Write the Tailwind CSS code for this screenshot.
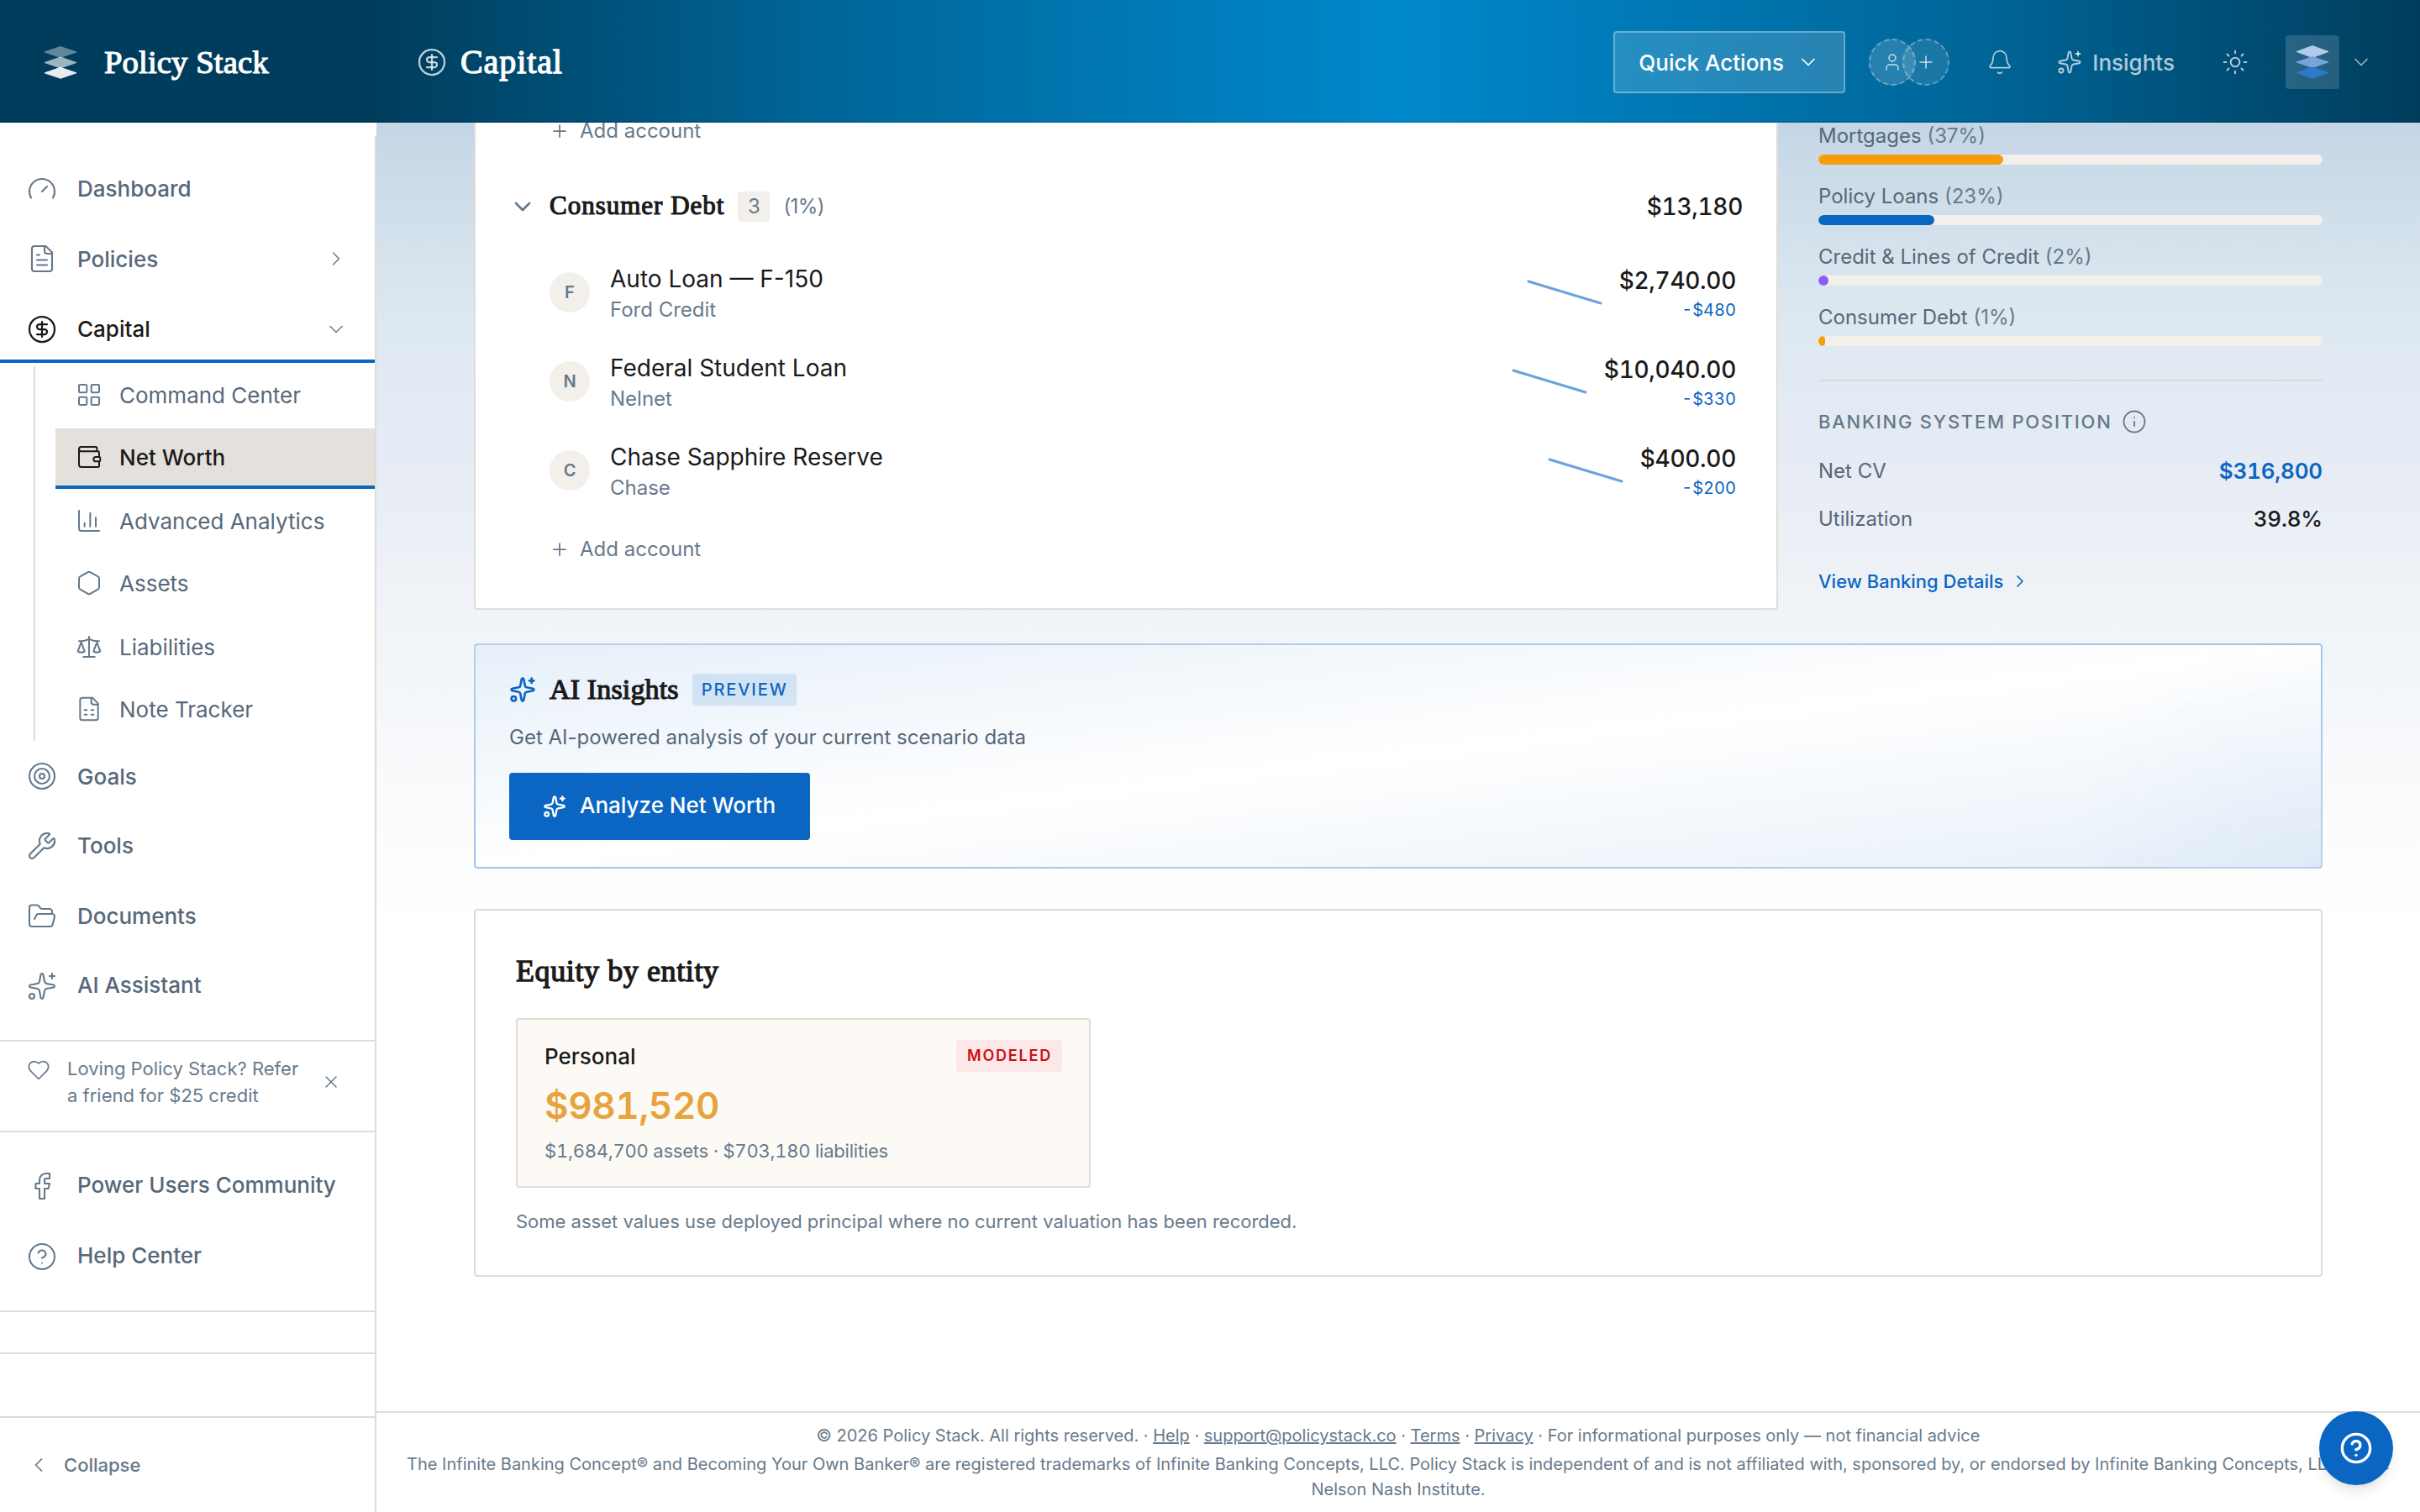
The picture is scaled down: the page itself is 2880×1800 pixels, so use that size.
<!DOCTYPE html>
<html lang="en">
<head>
    <meta charset="UTF-8">
    <meta name="viewport" content="width=device-width, initial-scale=1.0">
    <title>Policy Stack - Net Worth</title>
    <script src="https://cdn.jsdelivr.net/npm/@tailwindcss/browser@4"></script>
</head>
<body class="h-[1800px] w-[2880px] overflow-hidden bg-white font-[Inter,sans-serif] text-[#1a1a1a] antialiased">

    <!-- Icon sprite -->
    <svg class="hidden">
        <symbol id="gauge" viewBox="0 0 24 24"><path d="m12 14 4-4"/><path d="M3.34 19a10 10 0 1 1 17.32 0"/></symbol>
        <symbol id="file-text" viewBox="0 0 24 24"><path d="M15 2H6a2 2 0 0 0-2 2v16a2 2 0 0 0 2 2h12a2 2 0 0 0 2-2V7Z"/><path d="M14 2v4a2 2 0 0 0 2 2h4"/><path d="M10 9H8"/><path d="M16 13H8"/><path d="M16 17H8"/></symbol>
        <symbol id="dollar" viewBox="0 0 24 24"><circle cx="12" cy="12" r="10"/><path d="M16 8h-6a2 2 0 1 0 0 4h4a2 2 0 1 1 0 4H8"/><path d="M12 18V6"/></symbol>
        <symbol id="grid" viewBox="0 0 24 24"><rect width="7" height="7" x="3" y="3" rx="1"/><rect width="7" height="7" x="14" y="3" rx="1"/><rect width="7" height="7" x="14" y="14" rx="1"/><rect width="7" height="7" x="3" y="14" rx="1"/></symbol>
        <symbol id="wallet" viewBox="0 0 24 24"><path d="M19 7V4a1 1 0 0 0-1-1H5a2 2 0 0 0 0 4h15a1 1 0 0 1 1 1v4h-3a2 2 0 0 0 0 4h3a1 1 0 0 0 1-1v-2a1 1 0 0 0-1-1"/><path d="M3 5v14a2 2 0 0 0 2 2h15a1 1 0 0 0 1-1v-4"/></symbol>
        <symbol id="chart" viewBox="0 0 24 24"><path d="M3 3v16a2 2 0 0 0 2 2h16"/><path d="M18 17V9"/><path d="M13 17V5"/><path d="M8 17v-3"/></symbol>
        <symbol id="hexagon" viewBox="0 0 24 24"><path d="M21 16V8a2 2 0 0 0-1-1.73l-7-4a2 2 0 0 0-2 0l-7 4A2 2 0 0 0 3 8v8a2 2 0 0 0 1 1.73l7 4a2 2 0 0 0 2 0l7-4A2 2 0 0 0 21 16z"/></symbol>
        <symbol id="scale" viewBox="0 0 24 24"><path d="m16 16 3-8 3 8c-.87.65-1.92 1-3 1s-2.13-.35-3-1Z"/><path d="m2 16 3-8 3 8c-.87.65-1.92 1-3 1s-2.13-.35-3-1Z"/><path d="M7 21h10"/><path d="M12 3v18"/><path d="M3 7h2c2 0 5-1 7-2 2 1 5 2 7 2h2"/></symbol>
        <symbol id="sheet" viewBox="0 0 24 24"><path d="M15 2H6a2 2 0 0 0-2 2v16a2 2 0 0 0 2 2h12a2 2 0 0 0 2-2V7Z"/><path d="M14 2v4a2 2 0 0 0 2 2h4"/><path d="M8 13h2"/><path d="M14 13h2"/><path d="M8 17h2"/><path d="M14 17h2"/></symbol>
        <symbol id="target" viewBox="0 0 24 24"><circle cx="12" cy="12" r="10"/><circle cx="12" cy="12" r="6"/><circle cx="12" cy="12" r="2"/></symbol>
        <symbol id="wrench" viewBox="0 0 24 24"><path d="M14.7 6.3a1 1 0 0 0 0 1.4l1.6 1.6a1 1 0 0 0 1.4 0l3.106-3.105c.32-.322.863-.22.983.218a6 6 0 0 1-8.259 7.057l-7.91 7.91a1 1 0 0 1-2.999-3l7.91-7.91a6 6 0 0 1 7.057-8.259c.438.12.54.662.219.984z"/></symbol>
        <symbol id="folder" viewBox="0 0 24 24"><path d="m6 14 1.5-2.9A2 2 0 0 1 9.24 10H20a2 2 0 0 1 1.94 2.5l-1.54 6a2 2 0 0 1-1.95 1.5H4a2 2 0 0 1-2-2V5a2 2 0 0 1 2-2h3.9a2 2 0 0 1 1.69.9l.81 1.2a2 2 0 0 0 1.67.9H18a2 2 0 0 1 2 2v2"/></symbol>
        <symbol id="sparkles" viewBox="0 0 24 24"><path d="M11.017 2.814a1 1 0 0 1 1.966 0l1.051 5.558a2 2 0 0 0 1.594 1.594l5.558 1.051a1 1 0 0 1 0 1.966l-5.558 1.051a2 2 0 0 0-1.594 1.594l-1.051 5.558a1 1 0 0 1-1.966 0l-1.051-5.558a2 2 0 0 0-1.594-1.594l-5.558-1.051a1 1 0 0 1 0-1.966l5.558-1.051a2 2 0 0 0 1.594-1.594z"/><path d="M20 2v4"/><path d="M22 4h-4"/><circle cx="4" cy="20" r="2"/></symbol>
        <symbol id="heart" viewBox="0 0 24 24"><path d="M19 14c1.49-1.46 3-3.21 3-5.5A5.5 5.5 0 0 0 16.5 3c-1.76 0-3 .5-4.5 2-1.5-1.5-2.74-2-4.5-2A5.5 5.5 0 0 0 2 8.5c0 2.3 1.5 4.05 3 5.5l7 7Z"/></symbol>
        <symbol id="x" viewBox="0 0 24 24"><path d="M18 6 6 18"/><path d="m6 6 12 12"/></symbol>
        <symbol id="facebook" viewBox="0 0 24 24"><path d="M18 2h-3a5 5 0 0 0-5 5v3H7v4h3v8h4v-8h3l1-4h-4V7a1 1 0 0 1 1-1h3z"/></symbol>
        <symbol id="help" viewBox="0 0 24 24"><circle cx="12" cy="12" r="10"/><path d="M9.09 9a3 3 0 0 1 5.83 1c0 2-3 3-3 3"/><path d="M12 17h.01"/></symbol>
        <symbol id="info" viewBox="0 0 24 24"><circle cx="12" cy="12" r="10"/><path d="M12 16v-4"/><path d="M12 8h.01"/></symbol>
        <symbol id="bell" viewBox="0 0 24 24"><path d="M10.268 21a2 2 0 0 0 3.464 0"/><path d="M3.262 15.326A1 1 0 0 0 4 17h16a1 1 0 0 0 .74-1.673C19.41 13.956 18 12.499 18 8A6 6 0 0 0 6 8c0 4.499-1.411 5.956-2.738 7.326"/></symbol>
        <symbol id="sun" viewBox="0 0 24 24"><circle cx="12" cy="12" r="4"/><path d="M12 2v2"/><path d="M12 20v2"/><path d="m4.93 4.93 1.41 1.41"/><path d="m17.66 17.66 1.41 1.41"/><path d="M2 12h2"/><path d="M20 12h2"/><path d="m6.34 17.66-1.41 1.41"/><path d="m19.07 4.93-1.41 1.41"/></symbol>
        <symbol id="user" viewBox="0 0 24 24"><path d="M19 21v-2a4 4 0 0 0-4-4H9a4 4 0 0 0-4 4v2"/><circle cx="12" cy="7" r="4"/></symbol>
        <symbol id="plus" viewBox="0 0 24 24"><path d="M5 12h14"/><path d="M12 5v14"/></symbol>
        <symbol id="down" viewBox="0 0 24 24"><path d="m6 9 6 6 6-6"/></symbol>
        <symbol id="right" viewBox="0 0 24 24"><path d="m9 18 6-6-6-6"/></symbol>
        <symbol id="left" viewBox="0 0 24 24"><path d="m15 18-6-6 6-6"/></symbol>
    </svg>

    <!-- Header -->
    <header class="flex h-[146px] bg-[#003d5c] text-white">
        <div class="flex w-[448px] items-center pt-0.5 pl-12 shadow-[inset_0_-2px_0_rgb(0_0_0/0.1)]">
            <svg class="size-12" viewBox="0 0 48 48" fill="#fff" stroke="#fff" stroke-width="1" stroke-linejoin="round">
                <path opacity=".38" d="M24 5.500 43 12 24 18.500 5 12Z"/>
                <path opacity=".62" d="M24 18 43 24.500 24 31 5 24.500Z"/>
                <path opacity=".9" d="M24 30.300 43 36.800 24 43.300 5 36.800Z"/>
            </svg>
            <span class="ml-7 font-['Liberation_Serif',serif] text-[38.700px] leading-none tracking-[0.1px] [-webkit-text-stroke:1.2px]">Policy Stack</span>
        </div>
        <div class="flex flex-1 items-center bg-[linear-gradient(90deg,#003d5c_0%,#006699_22%,#0088cc_50%,#006699_78%,#003d5c_100%)] pt-0.5 pr-14 pl-12 shadow-[inset_0_-2px_0_rgb(0_0_0/0.1)]">
            <svg class="size-9 fill-none stroke-current stroke-[1.5] text-white/75" stroke-linecap="round" stroke-linejoin="round"><use href="#dollar"/></svg>
            <h1 class="ml-4 font-['Liberation_Serif',serif] text-[40px] leading-none tracking-[0.9px] [-webkit-text-stroke:1.3px]">Capital</h1>

            <div class="ml-auto flex items-center">
                <button class="flex h-[74px] w-[276px] items-center justify-between rounded border-2 border-white/30 bg-white/15 px-7 text-[26px] font-medium">
                    Quick Actions
                    <svg class="size-7 fill-none stroke-current stroke-[1.5]" stroke-linecap="round" stroke-linejoin="round"><use href="#down"/></svg>
                </button>
                <div class="ml-7 flex text-white/75">
                    <div class="grid size-14 place-items-center rounded-full border-2 border-dashed border-white/30 bg-white/15">
                        <svg class="size-6 fill-none stroke-current stroke-[1.5]" stroke-linecap="round" stroke-linejoin="round"><use href="#user"/></svg>
                    </div>
                    <div class="-ml-4 grid size-14 place-items-center rounded-full border-2 border-dashed border-white/30 bg-white/10">
                        <svg class="size-6 fill-none stroke-current stroke-[1.5]" stroke-linecap="round" stroke-linejoin="round"><use href="#plus"/></svg>
                    </div>
                </div>
                <svg class="ml-11 size-8 fill-none stroke-current stroke-[1.25] text-white/70" stroke-linecap="round" stroke-linejoin="round"><use href="#bell"/></svg>
                <div class="ml-[52px] flex items-center gap-3 text-[26px] font-medium text-white/70">
                    <svg class="size-[30px] fill-none stroke-current stroke-[1.5]" stroke-linecap="round" stroke-linejoin="round"><use href="#sparkles"/></svg>
                    Insights
                </div>
                <svg class="ml-14 size-8 fill-none stroke-current stroke-[1.5] text-white/70" stroke-linecap="round" stroke-linejoin="round"><use href="#sun"/></svg>
                <div class="ml-11 grid size-16 place-items-center rounded bg-white/15">
                    <svg class="size-12" viewBox="0 0 48 48" stroke-width="1" stroke-linejoin="round">
                        <path fill="#b3caee" stroke="#b3caee" d="M24 4.500 43 11.500 24 18.500 5 11.500Z"/>
                        <path fill="#7aa3dc" stroke="#7aa3dc" d="M24 17.500 43 24 24 30.500 5 24Z"/>
                        <path fill="#2f78cb" stroke="#2f78cb" d="M24 30 43 36.500 24 43 5 36.500Z"/>
                    </svg>
                </div>
                <svg class="ml-3 size-7 fill-none stroke-current stroke-[1.5] text-white/60" stroke-linecap="round" stroke-linejoin="round"><use href="#down"/></svg>
            </div>
        </div>
    </header>

    <div class="flex h-[1654px]">
        <!-- Sidebar -->
        <aside class="w-[448px] shrink-0 bg-white pt-4">
            <div class="h-full border-r-2 border-[#e0dcd8] pt-[27px] text-[26px] text-[#56687a]">
                <nav class="font-medium">
                    <a class="mb-[7px] flex h-[76px] items-center gap-6 border-b-4 border-transparent px-8">
                        <svg class="size-9 fill-none stroke-[#66788a] stroke-[1.4]" stroke-linecap="round" stroke-linejoin="round"><use href="#gauge"/></svg>
                        <span class="-mt-0.5">Dashboard</span>
                    </a>
                    <a class="mb-2 flex h-[76px] items-center gap-6 border-b-4 border-transparent px-8">
                        <svg class="size-9 fill-none stroke-[#66788a] stroke-[1.4]" stroke-linecap="round" stroke-linejoin="round"><use href="#file-text"/></svg>
                        <span>Policies</span>
                        <svg class="ml-auto size-7 fill-none stroke-[#66788a] stroke-[1.25]" stroke-linecap="round" stroke-linejoin="round"><use href="#right"/></svg>
                    </a>
                    <a class="flex h-[76px] items-center gap-6 border-b-4 border-[#0a66c2] px-8 text-[#1a1a1a]">
                        <svg class="size-9 fill-none stroke-current stroke-[1.5]" stroke-linecap="round" stroke-linejoin="round"><use href="#dollar"/></svg>
                        <span class="-mt-0.5">Capital</span>
                        <svg class="ml-auto size-7 fill-none stroke-[#66788a] stroke-[1.25]" stroke-linecap="round" stroke-linejoin="round"><use href="#down"/></svg>
                    </a>
                    <div class="mt-1 mb-1.5 ml-10 border-l-2 border-[#e0dcd8] pl-6 font-normal">
                        <a class="mb-0.5 flex h-[72px] items-center gap-5 border-b-4 border-transparent pl-6">
                            <svg class="size-8 fill-none stroke-[#66788a] stroke-[1.5]" stroke-linecap="round" stroke-linejoin="round"><use href="#grid"/></svg>
                            Command Center
                        </a>
                        <a class="mb-1 flex h-[72px] items-center gap-5 border-b-4 border-[#0a66c2] bg-[#e4e1dc] pl-6 font-medium text-[#1a1a1a]">
                            <svg class="size-8 fill-none stroke-current stroke-[1.5]" stroke-linecap="round" stroke-linejoin="round"><use href="#wallet"/></svg>
                            Net Worth
                        </a>
                        <a class="mb-0.5 flex h-[72px] items-center gap-5 border-b-4 border-transparent pl-6">
                            <svg class="size-8 fill-none stroke-[#66788a] stroke-[1.5]" stroke-linecap="round" stroke-linejoin="round"><use href="#chart"/></svg>
                            Advanced Analytics
                        </a>
                        <a class="mb-1 flex h-[72px] items-center gap-5 border-b-4 border-transparent pl-6">
                            <svg class="size-8 fill-none stroke-[#66788a] stroke-[1.5]" stroke-linecap="round" stroke-linejoin="round"><use href="#hexagon"/></svg>
                            Assets
                        </a>
                        <a class="mb-0.5 flex h-[72px] items-center gap-5 border-b-4 border-transparent pl-6">
                            <svg class="size-8 fill-none stroke-[#66788a] stroke-[1.5]" stroke-linecap="round" stroke-linejoin="round"><use href="#scale"/></svg>
                            Liabilities
                        </a>
                        <a class="flex h-[72px] items-center gap-5 border-b-4 border-transparent pl-6">
                            <svg class="size-8 fill-none stroke-[#66788a] stroke-[1.5]" stroke-linecap="round" stroke-linejoin="round"><use href="#sheet"/></svg>
                            Note Tracker
                        </a>
                    </div>
                    <a class="mb-[7px] flex h-[76px] items-center gap-6 border-b-4 border-transparent px-8">
                        <svg class="size-9 fill-none stroke-[#66788a] stroke-[1.4]" stroke-linecap="round" stroke-linejoin="round"><use href="#target"/></svg>
                        <span>Goals</span>
                    </a>
                    <a class="mb-2 flex h-[76px] items-center gap-6 border-b-4 border-transparent px-8">
                        <svg class="size-9 fill-none stroke-[#66788a] stroke-[1.4]" stroke-linecap="round" stroke-linejoin="round"><use href="#wrench"/></svg>
                        <span class="-mt-0.5">Tools</span>
                    </a>
                    <a class="mb-[7px] flex h-[76px] items-center gap-6 border-b-4 border-transparent px-8">
                        <svg class="size-9 fill-none stroke-[#66788a] stroke-[1.4]" stroke-linecap="round" stroke-linejoin="round"><use href="#folder"/></svg>
                        <span class="-mt-0.5">Documents</span>
                    </a>
                    <a class="mb-6 flex h-[76px] items-center gap-6 border-b-4 border-transparent px-8">
                        <svg class="size-9 fill-none stroke-[#66788a] stroke-[1.4]" stroke-linecap="round" stroke-linejoin="round"><use href="#sparkles"/></svg>
                        <span class="-mt-[3px]">AI Assistant</span>
                    </a>
                </nav>

                <div class="flex h-[108px] items-start border-t-2 border-[#e0dcd8] pt-4 pl-8 text-[22px] leading-8 text-[#687a8c]">
                    <svg class="mt-1 size-7 fill-none stroke-current stroke-[1.5]" stroke-linecap="round" stroke-linejoin="round"><use href="#heart"/></svg>
                    <p class="ml-5 w-[300px]">Loving Policy Stack? Refer<br>a friend for $25 credit</p>
                    <svg class="mt-5 ml-0.5 size-6 fill-none stroke-current stroke-[1.5]" stroke-linecap="round" stroke-linejoin="round"><use href="#x"/></svg>
                </div>

                <div class="h-[214px] border-t-2 border-[#e0dcd8] pt-[26px] font-medium">
                    <a class="mb-2 flex h-[76px] items-center gap-6 px-8">
                        <svg class="size-9 fill-none stroke-[#66788a] stroke-[1.4]" stroke-linecap="round" stroke-linejoin="round"><use href="#facebook"/></svg>
                        <span class="-mt-[3px]">Power Users Community</span>
                    </a>
                    <a class="flex h-[76px] items-center gap-6 px-8">
                        <svg class="size-9 fill-none stroke-[#66788a] stroke-[1.4]" stroke-linecap="round" stroke-linejoin="round"><use href="#help"/></svg>
                        <span class="-mt-[3px]">Help Center</span>
                    </a>
                </div>
                <div class="h-[50px] border-t-2 border-[#e0dcd8]"></div>
                <div class="h-[76px] border-t-2 border-[#e0dcd8]"></div>
                <div class="flex h-[114px] items-center gap-4 border-t-2 border-[#e0dcd8] pl-8 text-[22px] font-medium text-[#66788a]">
                    <svg class="size-7 fill-none stroke-current stroke-[1.5]" stroke-linecap="round" stroke-linejoin="round"><use href="#left"/></svg>
                    Collapse
                </div>
            </div>
        </aside>

        <!-- Content -->
        <div class="flex flex-1 flex-col bg-[linear-gradient(180deg,#c4d5e6_0px,#cbdbe8_60px,#d9e5ee_190px,#dfe9f2_260px,#e7ecf5_420px,#eff3f7_560px,#f4f7fa_680px,#f9fafc_780px,#ffffff_960px)]">
            <main class="h-[1534px] pr-[116px] pl-[116px]">
                <div class="flex gap-12">
                    <section class="h-[580px] w-[1552px] rounded-b border-2 border-t-0 border-[#e0dcd8] bg-white">
                        <div class="flex h-5 items-center gap-3 pl-[88px] text-2xl text-[#687a8c]">
                            <svg class="size-6 fill-none stroke-current stroke-[1.75]" stroke-linecap="round" stroke-linejoin="round"><use href="#plus"/></svg>
                            Add account
                        </div>
                        <div class="mt-[31px] flex h-[98px] items-center pr-10 pl-10">
                            <svg class="size-8 fill-none stroke-[#66788a] stroke-2" stroke-linecap="round" stroke-linejoin="round"><use href="#down"/></svg>
                            <h2 class="-mt-1 ml-4 font-['Liberation_Serif',serif] text-[31px] leading-none tracking-[1px] [-webkit-text-stroke:1.2px]">Consumer Debt</h2>
                            <span class="ml-4 grid h-9 w-[38px] place-items-center rounded bg-[#f3f0eb] text-2xl text-[#687a8c]">3</span>
                            <span class="ml-4 text-2xl tracking-[-0.6px] text-[#687a8c]">(1%)</span>
                            <span class="ml-auto text-[28px] font-medium tracking-[-0.3px] tabular-nums">$13,180</span>
                        </div>
                        <div id="accounts"></div>
                        <div class="flex h-[82px] items-center gap-3 pl-[88px] text-2xl text-[#687a8c]">
                            <svg class="size-6 fill-none stroke-current stroke-[1.75]" stroke-linecap="round" stroke-linejoin="round"><use href="#plus"/></svg>
                            Add account
                        </div>
                    </section>

                    <aside class="w-[600px] text-2xl leading-8 text-[#56687a]">
                        <div id="liabilities"></div>
                        <div class="mt-[18px] border-t-2 border-[#dddad7] pt-8">
                            <div class="flex h-8 items-center gap-[11px] text-[22px] font-medium tracking-[1.760px] text-[#66788a]">
                                BANKING SYSTEM POSITION
                                <svg class="size-[30px] fill-none stroke-current stroke-[1.5]" stroke-linecap="round" stroke-linejoin="round"><use href="#info"/></svg>
                            </div>
                            <div class="mt-[27px] flex h-8 items-center justify-between">
                                <span>Net CV</span>
                                <span class="text-[26px] font-semibold tracking-[-0.2px] text-[#0a66c2] tabular-nums">$316,800</span>
                            </div>
                            <div class="mt-[25px] flex h-8 items-center justify-between">
                                <span>Utilization</span>
                                <span class="text-[26px] font-medium tracking-[-0.2px] text-[#1a1a1a] tabular-nums">39.8%</span>
                            </div>
                            <a class="mt-[42px] flex h-8 items-center gap-2 text-[22px] font-medium text-[#0a66c2]">
                                View Banking Details
                                <svg class="size-6 fill-none stroke-current stroke-[1.75]" stroke-linecap="round" stroke-linejoin="round"><use href="#right"/></svg>
                            </a>
                        </div>
                    </aside>
                </div>

                <section class="mt-10 h-[268px] rounded border-2 border-[#0a66c2]/30 bg-white bg-[radial-gradient(circle_300px_at_100%_100%,rgb(10_102_194/0.04),transparent),linear-gradient(to_bottom_right,rgb(10_102_194/0.1),transparent_50%,rgb(10_102_194/0.1))] px-10 pt-[34px]">
                    <div class="flex h-[38px] items-center gap-4">
                        <svg class="size-8 fill-none stroke-[#0a66c2] stroke-2" stroke-linecap="round" stroke-linejoin="round"><use href="#sparkles"/></svg>
                        <h2 class="font-['Liberation_Serif',serif] text-[34px] leading-none tracking-[0.15px] [-webkit-text-stroke:1.2px]">AI Insights</h2>
                        <span class="flex h-[38px] items-center rounded bg-[#0a66c2]/12 pr-2.5 pl-[11px] text-xl font-medium tracking-[1.9px] text-[#0a66c2]">PREVIEW</span>
                    </div>
                    <p class="mt-[22px] text-2xl leading-8 text-[#56687a]">Get AI-powered analysis of your current scenario data</p>
                    <button class="mt-[26px] flex h-20 w-[358px] items-center gap-4 rounded bg-[#0a66c2] px-10 text-[26px] font-medium text-white">
                        <svg class="size-7 fill-none stroke-current stroke-2" stroke-linecap="round" stroke-linejoin="round"><use href="#sparkles"/></svg>
                        <span class="-mt-[3px] whitespace-nowrap">Analyze Net Worth</span>
                    </button>
                </section>

                <section class="mt-12 h-[438px] rounded border-2 border-[#e0dcd8] bg-white px-12 pt-[52px]">
                    <h2 class="h-10 font-['Liberation_Serif',serif] text-[36px] leading-10 tracking-[0.6px] [-webkit-text-stroke:1.3px]">Equity by entity</h2>
                    <div class="mt-9 h-[202px] w-[684px] rounded border-2 border-[#e0dcd8] bg-[#fdfaf5] px-8 pt-6">
                        <div class="flex h-[38px] items-center justify-between">
                            <span class="text-[26px] font-medium">Personal</span>
                            <span class="flex h-[38px] items-center rounded bg-[#fce8e8] pr-3 pl-[13px] text-lg font-semibold tracking-[1.8px] text-[#cc1016]">MODELED</span>
                        </div>
                        <p class="mt-3.5 text-[44px] leading-[52px] font-semibold tracking-[-0.4px] text-[#e7a33e] tabular-nums">$981,520</p>
                        <p class="mt-3 text-[22px] leading-8 tracking-[-0.22px] text-[#687a8c] tabular-nums">$1,684,700 assets · $703,180 liabilities</p>
                    </div>
                    <p class="mt-6 text-[22px] leading-8 text-[#687a8c]">Some asset values use deployed principal where no current valuation has been recorded.</p>
                </section>
            </main>

            <footer class="flex-1 border-t-2 border-[#e0dcd8] bg-white px-8 pt-3 text-center text-xl leading-[30px] text-[#687a8c]">
                <p>© 2026 Policy Stack. All rights reserved. · <a class="underline">Help</a> · <a class="underline">support@policystack.co</a> · <a class="underline">Terms</a> · <a class="underline">Privacy</a> · For informational purposes only — not financial advice</p>
                <p class="mt-1">The Infinite Banking Concept® and Becoming Your Own Banker® are registered trademarks of Infinite Banking Concepts, LLC. Policy Stack is independent of and is not affiliated with, sponsored by, or endorsed by Infinite Banking Concepts, LLC or the Nelson Nash Institute.</p>
            </footer>
        </div>
    </div>

    <!-- Floating help button -->
    <button class="fixed right-8 bottom-8 grid size-[88px] place-items-center rounded-full bg-[#0a66c2] text-white shadow-lg">
        <svg class="size-10 fill-none stroke-current stroke-2" stroke-linecap="round" stroke-linejoin="round"><use href="#help"/></svg>
    </button>

    <script>
        const accounts = [
            { name: 'Auto Loan — F-150', lender: 'Ford Credit', amount: '$2,740.00', change: '-$480' },
            { name: 'Federal Student Loan', lender: 'Nelnet', amount: '$10,040.00', change: '-$330' },
            { name: 'Chase Sapphire Reserve', lender: 'Chase', amount: '$400.00', change: '-$200' },
        ];

        document.getElementById('accounts').innerHTML = accounts.map(a => `
            <div class="flex h-[106px] items-center pr-12 pl-[88px]">
                <span class="grid size-12 place-items-center rounded-full bg-[#f3f0eb] text-xl font-semibold text-[#66788a]">${a.lender[0]}</span>
                <div class="ml-6 pt-[3px]">
                    <p class="text-[28px] leading-[38px]">${a.name}</p>
                    <p class="text-2xl leading-9 text-[#687a8c]">${a.lender}</p>
                </div>
                <svg class="ml-auto h-8 w-[90px] fill-none stroke-[#6ba3dc] stroke-[3]" viewBox="0 0 90 32" stroke-linecap="round"><path d="M2 3 88 29"/></svg>
                <div class="ml-5 pt-[3px] text-right tabular-nums">
                    <p class="text-[28px] leading-[38px] font-medium tracking-[-0.3px]">${a.amount}</p>
                    <p class="text-xl leading-8 text-[#0a66c2]">${a.change}</p>
                </div>
            </div>`).join('');

        const liabilities = [
            { label: 'Mortgages', share: 37, width: 36.6, color: '#f59e0b' },
            { label: 'Policy Loans', share: 23, width: 23, color: '#0a66c2' },
            { label: 'Credit & Lines of Credit', share: 2, width: 2, color: '#8b5cf6' },
            { label: 'Consumer Debt', share: 1, width: 1.35, color: '#f59e0b' },
        ];

        document.getElementById('liabilities').innerHTML = liabilities.map(l => `
            <div class="h-[72px]">
                <p class="h-8">${l.label.replace('&', '&amp;')} <span class="text-[#687a8c]">(${l.share}%)</span></p>
                <div class="mt-1.5 h-3 overflow-hidden rounded-full bg-[#f3f0eb]">
                    <div class="h-full rounded-full" style="width: ${l.width}%; background: ${l.color}"></div>
                </div>
            </div>`).join('');
    </script>
</body>
</html>
